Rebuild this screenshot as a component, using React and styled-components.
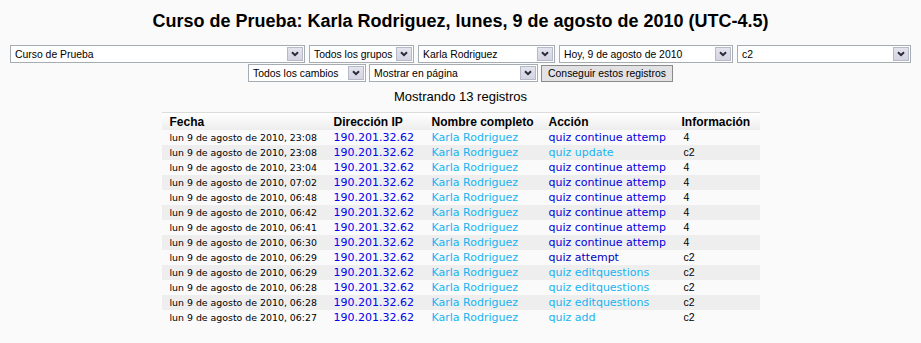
import React from 'react';
import styled, { createGlobalStyle } from 'styled-components';

const GlobalStyle = createGlobalStyle`
  html, body {
    margin: 0;
    padding: 0;
    background: #fafafa;
  }
  body {
    font-family: "Liberation Sans", Arial, sans-serif;
    color: #000;
  }
`;

const Page = styled.div`
  padding-top: 10px;
  padding-bottom: 18px;
`;

const Title = styled.h2`
  margin: 0;
  text-align: center;
  font-family: "Liberation Sans", Arial, sans-serif;
  font-size: 18px;
  font-weight: bold;
  line-height: 22px;
`;

const Filters = styled.form`
  margin-top: 13px;
  display: flex;
  flex-direction: column;
  align-items: center;
  gap: 1px;
`;

const FilterRow = styled.div`
  display: flex;
  justify-content: center;
  align-items: center;
  gap: ${({ $gap }) => $gap || 4}px;
`;

const SelectBox = styled.div`
  box-sizing: border-box;
  width: ${({ $w }) => $w}px;
  height: 18px;
  border: 1px solid #a5acb2;
  background: #fff;
  display: flex;
  align-items: center;
  justify-content: space-between;
  padding: 0 1px 0 4px;
  font-size: 10.4px;
  color: #000;
  white-space: nowrap;
`;

const ArrowBox = styled.span`
  box-sizing: border-box;
  width: 16px;
  height: 14px;
  border: 1px solid #b6bac8;
  background: linear-gradient(#e4e4ee, #d4d4e2);
  display: flex;
  align-items: center;
  justify-content: center;
`;

const Button = styled.button`
  box-sizing: border-box;
  height: 17px;
  width: 132px;
  padding: 0 4px;
  border: 1px solid #8a8a8a;
  background: #e2e2e4;
  font-family: "Liberation Sans", Arial, sans-serif;
  font-size: 10.4px;
  color: #000;
  display: flex;
  align-items: center;
  justify-content: center;
`;

const Summary = styled.div`
  margin-top: 7px;
  text-align: center;
  font-size: 13px;
  line-height: 15px;
`;

const LogTable = styled.table`
  margin: 8px auto 0;
  width: 598px;
  border-collapse: collapse;
  table-layout: fixed;
  border-top: 1px solid #dcdcdc;
`;

const Col = styled.col`
  width: ${({ $w }) => ($w ? `${$w}px` : 'auto')};
`;

const HeadRow = styled.tr`
  background: linear-gradient(#ffffff, #ececec);
`;

const Th = styled.th`
  height: 17px;
  padding: 0 0 0 8px;
  text-align: left;
  font-size: 12px;
  font-weight: bold;
  white-space: nowrap;
  overflow: hidden;
`;

const Row = styled.tr`
  background: ${({ $odd }) => ($odd ? '#eeeeee' : '#fafafa')};
`;

const Td = styled.td`
  height: 15px;
  padding: 0 0 0 8px;
  white-space: nowrap;
  overflow: hidden;
  font-family: "DejaVu Sans", Verdana, sans-serif;
  font-size: 11px;
  line-height: 15px;
`;

const DateCell = styled(Td)`
  font-size: 9.4px;
  color: #000;
`;

const InfoCell = styled(Td)`
  padding-left: 10px;
  font-family: "Liberation Sans", Arial, sans-serif;
  font-size: 10.5px;
`;

const Link = styled.a`
  text-decoration: none;
  color: ${({ $c }) => $c};
`;

const BLUE = '#0000ee';
const ACT = '#0000dd';
const DARK = '#0000c0';
const CYAN = '#17b4f2';

const Chevron = () => (
  <svg width="8" height="6" viewBox="0 0 8 6">
    <path d="M1 1.2 L4 4.2 L7 1.2" fill="none" stroke="#2a2a3a" strokeWidth="2" />
  </svg>
);

const Select = ({ w, children }) => (
  <SelectBox $w={w}>
    <span>{children}</span>
    <ArrowBox>
      <Chevron />
    </ArrowBox>
  </SelectBox>
);

const rows = [
  ['23:08', 'quiz continue attemp', ACT, '4'],
  ['23:08', 'quiz update', CYAN, 'c2'],
  ['23:04', 'quiz continue attemp', ACT, '4'],
  ['07:02', 'quiz continue attemp', ACT, '4'],
  ['06:48', 'quiz continue attemp', ACT, '4'],
  ['06:42', 'quiz continue attemp', ACT, '4'],
  ['06:41', 'quiz continue attemp', ACT, '4'],
  ['06:30', 'quiz continue attemp', ACT, '4'],
  ['06:29', 'quiz attempt', DARK, 'c2'],
  ['06:29', 'quiz editquestions', CYAN, 'c2'],
  ['06:28', 'quiz editquestions', CYAN, 'c2'],
  ['06:28', 'quiz editquestions', CYAN, 'c2'],
  ['06:27', 'quiz add', CYAN, 'c2'],
];

export default function App() {
  return (
    <Page>
      <GlobalStyle />
      <Title>Curso de Prueba: Karla Rodriguez, lunes, 9 de agosto de 2010 (UTC-4.5)</Title>

      <Filters onSubmit={(e) => e.preventDefault()}>
        <FilterRow>
          <Select w={295}>Curso de Prueba</Select>
          <Select w={105}>Todos los grupos</Select>
          <Select w={137}>Karla Rodriguez</Select>
          <Select w={174}>Hoy, 9 de agosto de 2010</Select>
          <Select w={174}>c2</Select>
        </FilterRow>
        <FilterRow $gap={3}>
          <Select w={118}>Todos los cambios</Select>
          <Select w={169}>Mostrar en página</Select>
          <Button type="submit">Conseguir estos registros</Button>
        </FilterRow>
      </Filters>

      <Summary>Mostrando 13 registros</Summary>

      <LogTable>
        <colgroup>
          <Col $w={164} />
          <Col $w={98} />
          <Col $w={117} />
          <Col $w={133} />
          <Col />
        </colgroup>
        <thead>
          <HeadRow>
            <Th>Fecha</Th>
            <Th>Dirección IP</Th>
            <Th>Nombre completo</Th>
            <Th>Acción</Th>
            <Th>Información</Th>
          </HeadRow>
        </thead>
        <tbody>
          {rows.map(([time, action, color, info], i) => (
            <Row key={i} $odd={i % 2 === 1}>
              <DateCell>lun 9 de agosto de 2010, {time}</DateCell>
              <Td><Link href="#" $c={BLUE}>190.201.32.62</Link></Td>
              <Td><Link href="#" $c={CYAN}>Karla Rodriguez</Link></Td>
              <Td><Link href="#" $c={color}>{action}</Link></Td>
              <InfoCell>{info}</InfoCell>
            </Row>
          ))}
        </tbody>
      </LogTable>
    </Page>
  );
}
